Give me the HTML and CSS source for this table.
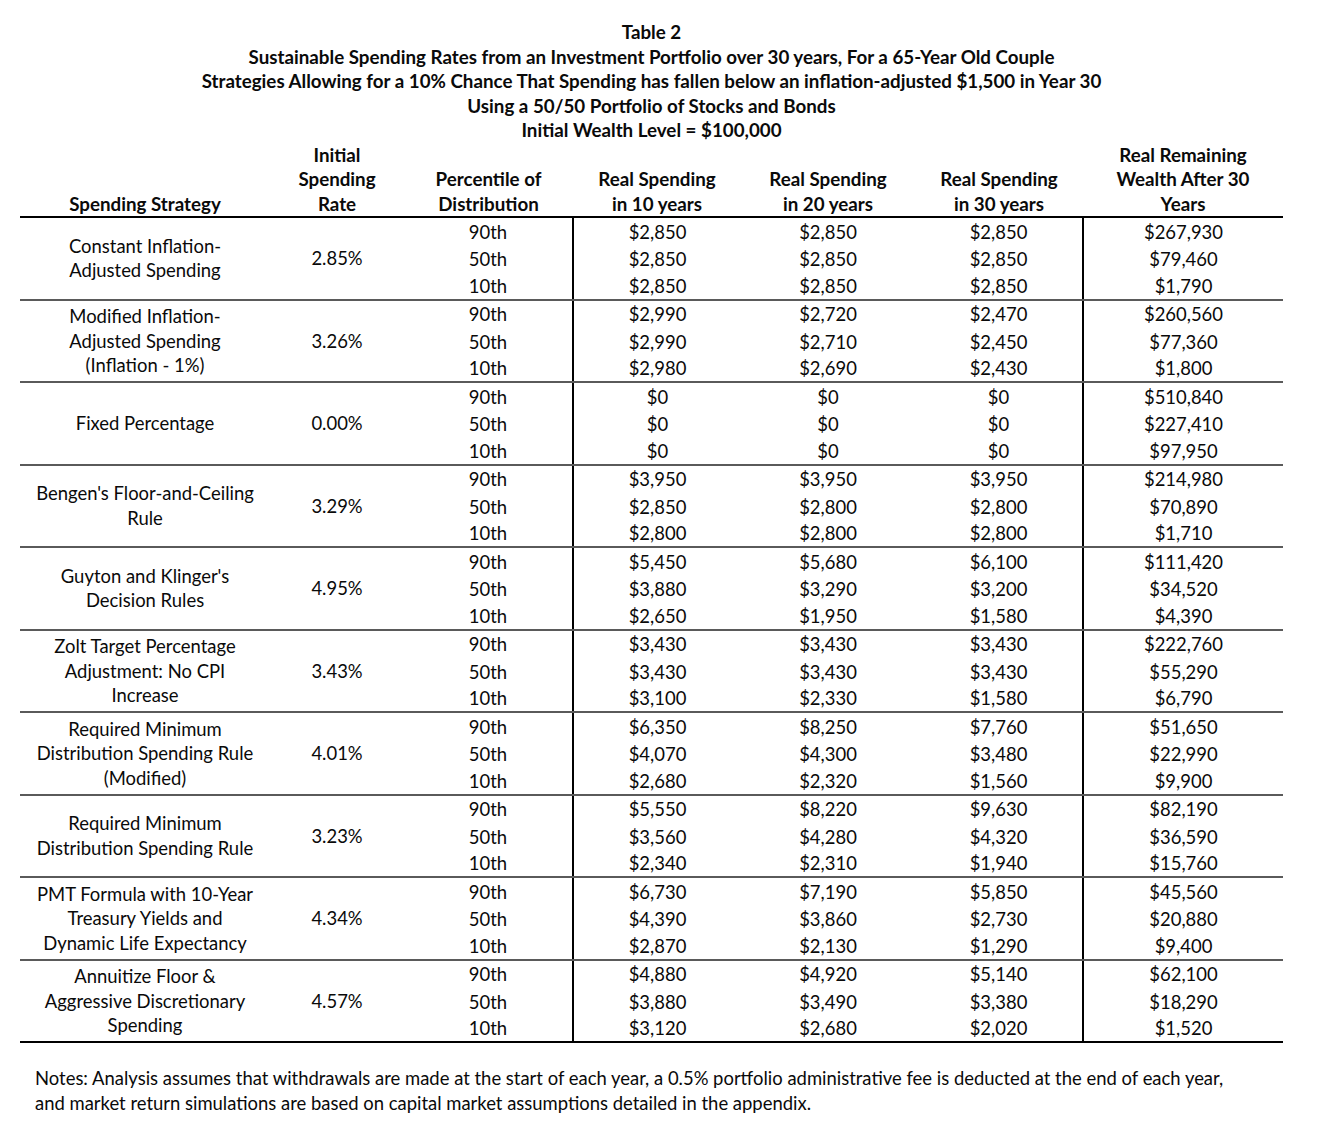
FILE: index.html
```html
<!DOCTYPE html>
<html>
<head>
<meta charset="utf-8">
<link rel="stylesheet" href="styles.css">
</head>
<body>
<div class="page">
  <div class="title">
    <div>Table 2</div>
    <div>Sustainable Spending Rates from an Investment Portfolio over 30 years, For a 65-Year Old Couple</div>
    <div>Strategies Allowing for a 10% Chance That Spending has fallen below an inflation-adjusted $1,500 in Year 30</div>
    <div>Using a 50/50 Portfolio of Stocks and Bonds</div>
    <div>Initial Wealth Level = $100,000</div>
  </div>
  <table class="data">
    <colgroup>
      <col class="c1"><col class="c2"><col class="c3"><col class="c4"><col class="c5"><col class="c6"><col class="c7">
    </colgroup>
    <thead>
      <tr>
        <th>Spending Strategy</th>
        <th>Initial<br>Spending<br>Rate</th>
        <th>Percentile of<br>Distribution</th>
        <th>Real Spending<br>in 10 years</th>
        <th>Real Spending<br>in 20 years</th>
        <th>Real Spending<br>in 30 years</th>
        <th>Real Remaining<br>Wealth After 30<br>Years</th>
      </tr>
    </thead>
    <tbody>
      <tr><td rowspan="3" class="strat">Constant Inflation-<br>Adjusted Spending</td><td rowspan="3" class="strat">2.85%</td><td>90th</td><td class="vl">$2,850</td><td>$2,850</td><td>$2,850</td><td class="vl">$267,930</td></tr>
      <tr><td>50th</td><td class="vl">$2,850</td><td>$2,850</td><td>$2,850</td><td class="vl">$79,460</td></tr>
      <tr class="end"><td>10th</td><td class="vl">$2,850</td><td>$2,850</td><td>$2,850</td><td class="vl">$1,790</td></tr>

      <tr><td rowspan="3" class="strat">Modified Inflation-<br>Adjusted Spending<br>(Inflation - 1%)</td><td rowspan="3" class="strat">3.26%</td><td>90th</td><td class="vl">$2,990</td><td>$2,720</td><td>$2,470</td><td class="vl">$260,560</td></tr>
      <tr><td>50th</td><td class="vl">$2,990</td><td>$2,710</td><td>$2,450</td><td class="vl">$77,360</td></tr>
      <tr class="end"><td>10th</td><td class="vl">$2,980</td><td>$2,690</td><td>$2,430</td><td class="vl">$1,800</td></tr>

      <tr><td rowspan="3" class="strat">Fixed Percentage</td><td rowspan="3" class="strat">0.00%</td><td>90th</td><td class="vl">$0</td><td>$0</td><td>$0</td><td class="vl">$510,840</td></tr>
      <tr><td>50th</td><td class="vl">$0</td><td>$0</td><td>$0</td><td class="vl">$227,410</td></tr>
      <tr class="end"><td>10th</td><td class="vl">$0</td><td>$0</td><td>$0</td><td class="vl">$97,950</td></tr>

      <tr><td rowspan="3" class="strat">Bengen's Floor-and-Ceiling<br>Rule</td><td rowspan="3" class="strat">3.29%</td><td>90th</td><td class="vl">$3,950</td><td>$3,950</td><td>$3,950</td><td class="vl">$214,980</td></tr>
      <tr><td>50th</td><td class="vl">$2,850</td><td>$2,800</td><td>$2,800</td><td class="vl">$70,890</td></tr>
      <tr class="end"><td>10th</td><td class="vl">$2,800</td><td>$2,800</td><td>$2,800</td><td class="vl">$1,710</td></tr>

      <tr><td rowspan="3" class="strat">Guyton and Klinger's<br>Decision Rules</td><td rowspan="3" class="strat">4.95%</td><td>90th</td><td class="vl">$5,450</td><td>$5,680</td><td>$6,100</td><td class="vl">$111,420</td></tr>
      <tr><td>50th</td><td class="vl">$3,880</td><td>$3,290</td><td>$3,200</td><td class="vl">$34,520</td></tr>
      <tr class="end"><td>10th</td><td class="vl">$2,650</td><td>$1,950</td><td>$1,580</td><td class="vl">$4,390</td></tr>

      <tr><td rowspan="3" class="strat">Zolt Target Percentage<br>Adjustment: No CPI<br>Increase</td><td rowspan="3" class="strat">3.43%</td><td>90th</td><td class="vl">$3,430</td><td>$3,430</td><td>$3,430</td><td class="vl">$222,760</td></tr>
      <tr><td>50th</td><td class="vl">$3,430</td><td>$3,430</td><td>$3,430</td><td class="vl">$55,290</td></tr>
      <tr class="end"><td>10th</td><td class="vl">$3,100</td><td>$2,330</td><td>$1,580</td><td class="vl">$6,790</td></tr>

      <tr><td rowspan="3" class="strat">Required Minimum<br>Distribution Spending Rule<br>(Modified)</td><td rowspan="3" class="strat">4.01%</td><td>90th</td><td class="vl">$6,350</td><td>$8,250</td><td>$7,760</td><td class="vl">$51,650</td></tr>
      <tr><td>50th</td><td class="vl">$4,070</td><td>$4,300</td><td>$3,480</td><td class="vl">$22,990</td></tr>
      <tr class="end"><td>10th</td><td class="vl">$2,680</td><td>$2,320</td><td>$1,560</td><td class="vl">$9,900</td></tr>

      <tr><td rowspan="3" class="strat">Required Minimum<br>Distribution Spending Rule</td><td rowspan="3" class="strat">3.23%</td><td>90th</td><td class="vl">$5,550</td><td>$8,220</td><td>$9,630</td><td class="vl">$82,190</td></tr>
      <tr><td>50th</td><td class="vl">$3,560</td><td>$4,280</td><td>$4,320</td><td class="vl">$36,590</td></tr>
      <tr class="end"><td>10th</td><td class="vl">$2,340</td><td>$2,310</td><td>$1,940</td><td class="vl">$15,760</td></tr>

      <tr><td rowspan="3" class="strat">PMT Formula with 10-Year<br>Treasury Yields and<br>Dynamic Life Expectancy</td><td rowspan="3" class="strat">4.34%</td><td>90th</td><td class="vl">$6,730</td><td>$7,190</td><td>$5,850</td><td class="vl">$45,560</td></tr>
      <tr><td>50th</td><td class="vl">$4,390</td><td>$3,860</td><td>$2,730</td><td class="vl">$20,880</td></tr>
      <tr class="end"><td>10th</td><td class="vl">$2,870</td><td>$2,130</td><td>$1,290</td><td class="vl">$9,400</td></tr>

      <tr><td rowspan="3" class="strat">Annuitize Floor &amp;<br>Aggressive Discretionary<br>Spending</td><td rowspan="3" class="strat">4.57%</td><td>90th</td><td class="vl">$4,880</td><td>$4,920</td><td>$5,140</td><td class="vl">$62,100</td></tr>
      <tr><td>50th</td><td class="vl">$3,880</td><td>$3,490</td><td>$3,380</td><td class="vl">$18,290</td></tr>
      <tr class="end last"><td>10th</td><td class="vl">$3,120</td><td>$2,680</td><td>$2,020</td><td class="vl">$1,520</td></tr>
    </tbody>
  </table>
  <div class="notes">
    <div>Notes: Analysis assumes that withdrawals are made at the start of each year, a 0.5% portfolio administrative fee is deducted at the end of each year,</div>
    <div>and market return simulations are based on capital market assumptions detailed in the appendix.</div>
  </div>
</div>
</body>
</html>
```
FILE: styles.css
```css
html, body {
  margin: 0;
  padding: 0;
  background: #ffffff;
}
body {
  font-family: Lato, "Liberation Sans", sans-serif;
  font-size: 18.45px;
  color: #0a0a0a;
}
.page {
  width: 1343px;
  padding-top: 20px;
}
.title {
  width: 1263px;
  margin-left: 20px;
  text-align: center;
  font-weight: bold;
  font-size: 18.75px;
  line-height: 24.5px;
  white-space: nowrap;
}
.data {
  margin-left: 20px;
  width: 1263px;
  table-layout: fixed;
  border-collapse: collapse;
  border-spacing: 0;
}
.c1 { width: 250px; }
.c2 { width: 134px; }
.c3 { width: 169px; }
.c4 { width: 168px; }
.c5 { width: 174px; }
.c6 { width: 168px; }
.c7 { width: 200px; }
.data th {
  font-weight: bold;
  font-size: 18.75px;
  line-height: 24.5px;
  padding: 0;
  height: 72px;
  vertical-align: bottom;
  text-align: center;
  border-bottom: 2px solid #000000;
  white-space: nowrap;
}
.data td {
  padding: 0;
  height: 27.5px;
  line-height: 24.5px;
  text-align: center;
  vertical-align: middle;
  white-space: nowrap;
}
.data tr.end td {
  height: 25.5px;
}
.data td.vl {
  border-left: 2px solid #000000;
}
.data td.strat {
  border-bottom: 2px solid #5a5a5a;
}
.data tr.end td {
  border-bottom: 2px solid #5a5a5a;
}
.data tr.last td,
.data tr:nth-last-child(3) td.strat {
  border-bottom: 2px solid #000000;
}
.notes {
  margin-left: 35px;
  margin-top: 23px;
  line-height: 24.5px;
  white-space: nowrap;
}
```
